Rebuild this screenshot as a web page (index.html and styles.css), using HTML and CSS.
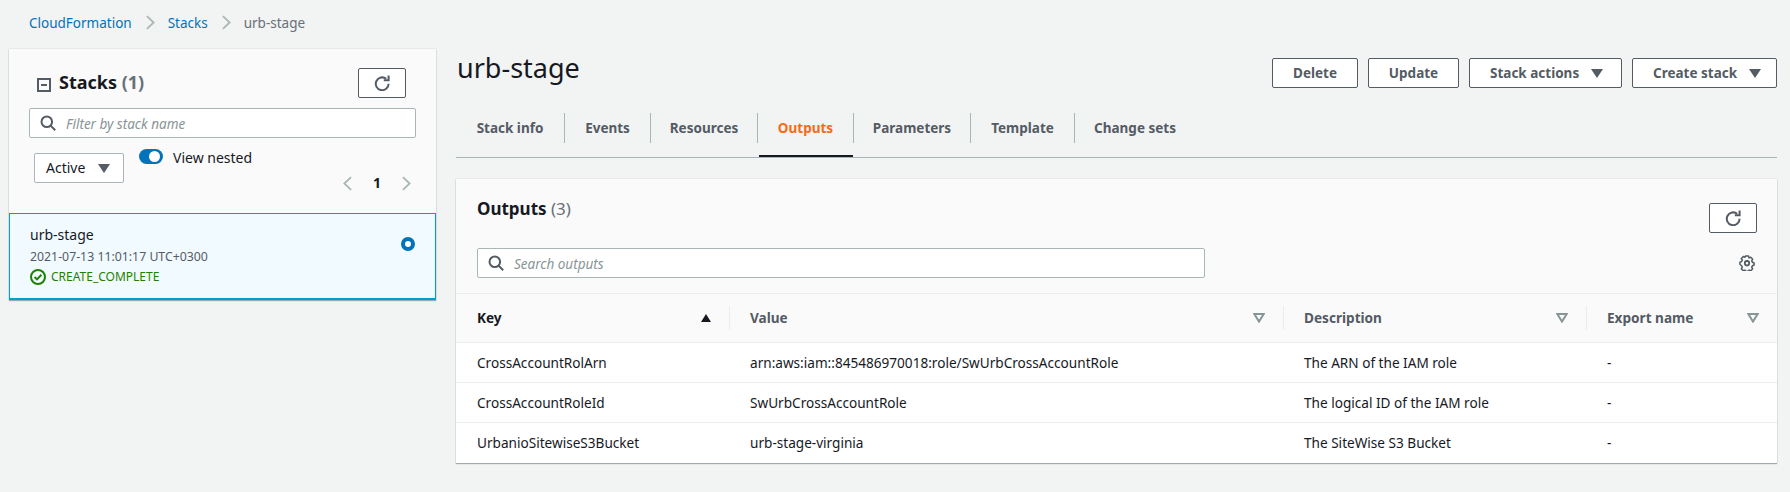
FILE: index.html
```html
<!DOCTYPE html>
<html lang="en">
<head>
  <meta charset="UTF-8">
  <title>urb-stage - CloudFormation</title>
  <link rel="stylesheet" href="styles.css">
</head>
<body>
  <svg class="defs" width="0" height="0">
    <symbol id="refresh" viewBox="0 0 16 16"><path d="M14.600 8.800a6.400 6.400 0 1 1-2.400-5" fill="none" stroke="currentColor" stroke-width="2"/><path d="M9.800 5.300h4.800V.5" fill="none" stroke="currentColor" stroke-width="2"/></symbol>
    <symbol id="search" viewBox="0 0 16 16"><circle cx="6.800" cy="6.800" r="5.300" fill="none" stroke="currentColor" stroke-width="2"/><path d="M10.600 10.600l4.600 4.600" stroke="currentColor" stroke-width="2"/></symbol>
    <symbol id="filter" viewBox="0 0 12 10"><path d="M1.300 1h9.400L6 8.600z" fill="none" stroke="currentColor" stroke-width="2"/></symbol>
  </svg>

  <nav class="crumbs">
    <a href="#">CloudFormation</a>
    <svg class="crumb-sep" viewBox="0 0 10 16"><path d="M1 1l7.500 7L1 15" fill="none" stroke="currentColor" stroke-width="2"/></svg>
    <a href="#">Stacks</a>
    <svg class="crumb-sep" viewBox="0 0 10 16"><path d="M1 1l7.500 7L1 15" fill="none" stroke="currentColor" stroke-width="2"/></svg>
    <span>urb-stage</span>
  </nav>

  <div class="page">
    <aside class="sidebar">
      <div class="side-top">
        <div class="side-head">
          <svg class="collapse" viewBox="0 0 14 14"><rect x="1" y="1" width="12" height="12" fill="none" stroke="currentColor" stroke-width="2"/><path d="M4 7h6" stroke="currentColor" stroke-width="2"/></svg>
          <h2 class="side-title">Stacks <span class="count">(1)</span></h2>
          <button class="btn btn-icon side-refresh"><svg class="icon"><use href="#refresh"/></svg></button>
        </div>
        <div class="search side-search">
          <svg class="icon"><use href="#search"/></svg>
          <span class="placeholder">Filter by stack name</span>
        </div>
        <div class="side-filters">
          <div class="select">Active <span class="caret"></span></div>
          <div class="toggle-wrap">
            <span class="toggle"></span>
            <span class="toggle-label">View nested</span>
          </div>
          <div class="pager">
            <svg class="pager-arrow" viewBox="0 0 10 16"><path d="M9 1L1.500 8 9 15" fill="none" stroke="currentColor" stroke-width="2"/></svg>
            <strong>1</strong>
            <svg class="pager-arrow" viewBox="0 0 10 16"><path d="M1 1l7.500 7L1 15" fill="none" stroke="currentColor" stroke-width="2"/></svg>
          </div>
        </div>
      </div>
      <div class="stack-item">
        <div>
          <div class="stack-name">urb-stage</div>
          <div class="stack-date">2021-07-13 11:01:17 UTC+0300</div>
          <div class="stack-status">
            <svg class="status-icon" viewBox="0 0 16 16"><circle cx="8" cy="8" r="7" fill="none" stroke="currentColor" stroke-width="2"/><path d="M4.600 8l2.400 2.400 4.400-4.600" fill="none" stroke="currentColor" stroke-width="2"/></svg>
            CREATE_COMPLETE
          </div>
        </div>
        <span class="radio"></span>
      </div>
    </aside>

    <main class="content">
      <header class="content-head">
        <h1 class="title">urb-stage</h1>
        <div class="actions">
          <button class="btn btn-delete">Delete</button>
          <button class="btn btn-update">Update</button>
          <button class="btn btn-menu btn-stack">Stack actions <span class="caret"></span></button>
          <button class="btn btn-menu btn-create">Create stack <span class="caret"></span></button>
        </div>
      </header>

      <div class="tabs">
        <a class="tab tab-info" href="#">Stack info</a>
        <a class="tab tab-events" href="#">Events</a>
        <a class="tab tab-res" href="#">Resources</a>
        <a class="tab tab-out active" href="#">Outputs</a>
        <a class="tab tab-par" href="#">Parameters</a>
        <a class="tab tab-tpl" href="#">Template</a>
        <a class="tab tab-chg" href="#">Change sets</a>
      </div>

      <section class="panel">
        <div class="panel-head">
          <div class="panel-top">
            <h2 class="panel-title">Outputs <span class="count">(3)</span></h2>
            <button class="btn btn-icon"><svg class="icon"><use href="#refresh"/></svg></button>
          </div>
          <div class="panel-tools">
            <div class="search out-search">
              <svg class="icon"><use href="#search"/></svg>
              <span class="placeholder">Search outputs</span>
            </div>
            <svg class="gear" viewBox="0 0 16 16"><path d="M6.500 1h3l.5 1.900 1.700-.7 2 2-1 1.700.8 1.400 1.600.7v2l-1.600.7-.8 1.400 1 1.700-2 2-1.700-.7-.5 1.100h-3l-.5-1.100-1.700.7-2-2 1-1.700-.8-1.400L.9 9.300v-2l1.600-.7.800-1.400-1-1.700 2-2 1.700.7z" fill="none" stroke="currentColor" stroke-width="1.500" stroke-linejoin="round"/><circle cx="8" cy="8.200" r="2.200" fill="none" stroke="currentColor" stroke-width="1.800"/></svg>
          </div>
        </div>

        <div class="table">
          <div class="row row-head">
            <div class="cell th th-key">Key <span class="sort"></span></div>
            <div class="cell th">Value <svg class="filter"><use href="#filter"/></svg></div>
            <div class="cell th">Description <svg class="filter"><use href="#filter"/></svg></div>
            <div class="cell th">Export name <svg class="filter"><use href="#filter"/></svg></div>
          </div>
          <div class="row">
            <div class="cell">CrossAccountRolArn</div>
            <div class="cell">arn:aws:iam::845486970018:role/SwUrbCrossAccountRole</div>
            <div class="cell">The ARN of the IAM role</div>
            <div class="cell">-</div>
          </div>
          <div class="row">
            <div class="cell">CrossAccountRoleId</div>
            <div class="cell">SwUrbCrossAccountRole</div>
            <div class="cell">The logical ID of the IAM role</div>
            <div class="cell">-</div>
          </div>
          <div class="row">
            <div class="cell">UrbanioSitewiseS3Bucket</div>
            <div class="cell">urb-stage-virginia</div>
            <div class="cell">The SiteWise S3 Bucket</div>
            <div class="cell">-</div>
          </div>
        </div>
      </section>
    </main>
  </div>
</body>
</html>
```

FILE: styles.css
```css
* {
  box-sizing: border-box;
}

body {
  margin: 0;
  height: 492px;
  overflow: hidden;
  background: #f2f3f3;
  color: #16191f;
  font-family: "Noto Sans", "Open Sans", sans-serif;
  font-size: 14px;
  line-height: 20px;
}

.defs {
  display: block;
}

a {
  color: #0073bb;
  text-decoration: none;
}

h1, h2 {
  margin: 0;
}

.crumbs {
  display: flex;
  align-items: center;
  height: 49px;
  padding: 0 0 4px 29px;
  font-size: 13.500px;
  color: #687078;
}

.crumb-sep {
  width: 9px;
  height: 15px;
  margin: 0 13px 0 14px;
  color: #aab7b8;
}

.page {
  display: flex;
  align-items: flex-start;
}

.sidebar {
  width: 427px;
  margin-left: 9px;
  background: #fafafa;
  box-shadow: 0 1px 1px rgba(0, 22, 43, .3), 0 0 1px rgba(0, 22, 43, .25);
}

.side-top {
  height: 164px;
  padding: 19px 20px 0;
}

.side-head {
  display: flex;
  align-items: center;
  height: 29px;
}

.collapse {
  width: 14px;
  height: 14px;
  margin: 4px 8px 0 8px;
  color: #545b64;
}

.side-title {
  font-size: 18px;
  font-weight: 700;
  line-height: 24px;
  margin-top: -2px;
}

.count {
  color: #687078;
  font-weight: 400;
}

.side-title .count {
  font-weight: 700;
}

.side-refresh {
  margin-left: auto;
  margin-right: 10px;
}

.btn {
  display: inline-flex;
  align-items: center;
  justify-content: center;
  height: 30px;
  padding: 0;
  background: #fff;
  border: 1px solid #545b64;
  border-radius: 2px;
  color: #545b64;
  font: 700 13.500px/20px "Noto Sans", sans-serif;
}

.btn-icon {
  width: 48px;
  height: 30px;
}

.icon {
  width: 16px;
  height: 16px;
  color: #545b64;
}

.search {
  display: flex;
  align-items: center;
  height: 30px;
  background: #fff;
  border: 1px solid #aab7b8;
  border-radius: 2px;
  padding-left: 10px;
}

.side-search {
  margin-top: 11px;
  width: 387px;
}

.placeholder {
  margin: 2px 0 0 10px;
  color: #879596;
  font-style: italic;
  font-size: 13.500px;
}

.side-filters {
  display: flex;
  margin-top: 15px;
  padding-left: 5px;
}

.select {
  display: flex;
  align-items: center;
  justify-content: space-between;
  width: 90px;
  height: 30px;
  padding: 0 13px 0 11px;
  background: #fff;
  border: 1px solid #aab7b8;
  border-radius: 2px;
}

.caret {
  display: inline-block;
  width: 0;
  height: 0;
  border-left: 6px solid transparent;
  border-right: 6px solid transparent;
  border-top: 9px solid #545b64;
}

.toggle-wrap {
  display: flex;
  align-items: flex-start;
  gap: 10px;
  margin: -4px 0 0 15px;
}

.toggle {
  position: relative;
  width: 24px;
  height: 15px;
  border-radius: 8px;
  background: #0073bb;
}

.toggle::after {
  content: "";
  position: absolute;
  top: 2px;
  right: 3px;
  width: 11px;
  height: 11px;
  border-radius: 50%;
  background: #fff;
}

.toggle-label {
  margin-top: -1px;
}

.pager {
  display: flex;
  align-items: center;
  gap: 21px;
  margin: 18px 0 0 91px;
  height: 24px;
}

.pager-arrow {
  width: 9px;
  height: 15px;
  color: #aab7b8;
}

.stack-item {
  display: flex;
  justify-content: space-between;
  height: 87px;
  padding: 10px 20px 0;
  background: #f1faff;
  border: 1px solid #00a1c9;
  border-bottom-width: 2px;
}

.stack-name {
  line-height: 22px;
}

.stack-date {
  margin-top: 1px;
  font-size: 12.300px;
  color: #545b64;
}

.stack-status {
  display: flex;
  align-items: center;
  gap: 5px;
  font-size: 12px;
  color: #1d8102;
}

.status-icon {
  width: 16px;
  height: 16px;
}

.radio {
  width: 14px;
  height: 14px;
  margin-top: 13px;
  border-radius: 50%;
  border: 4px solid #0073bb;
  background: #fff;
}

.content {
  width: 1321px;
  margin-left: 20px;
}

.content-head {
  display: flex;
  justify-content: space-between;
  height: 64px;
  padding-left: 1px;
}

.title {
  font-size: 27px;
  font-weight: 400;
  line-height: 36px;
  margin-top: 1px;
}

.actions {
  display: flex;
  gap: 10px;
  padding-top: 9px;
}

.btn-delete { width: 86px; }
.btn-update { width: 91px; }
.btn-stack { width: 153px; }
.btn-create { width: 145px; gap: 10px; }

.btn-menu {
  justify-content: flex-start;
  gap: 12px;
  padding-left: 20px;
}

.tabs {
  display: flex;
  height: 45px;
  border-bottom: 1px solid #aab7b8;
}

.tab {
  position: relative;
  display: flex;
  align-items: center;
  justify-content: center;
  height: 30px;
  color: #545b64;
  font-weight: 700;
  font-size: 13.500px;
  border-right: 1px solid #aab7b8;
}

.tab-info { width: 109px; }
.tab-events { width: 86px; }
.tab-res { width: 107px; }
.tab-out { width: 96px; }
.tab-par { width: 117px; }
.tab-tpl { width: 104px; }
.tab-chg { width: 120px; border-right: 0; }

.tab.active {
  color: #f96a18;
}

.tab.active::after {
  content: "";
  position: absolute;
  left: 1px;
  right: 0;
  bottom: -14px;
  height: 2px;
  background: #16191f;
}

.panel {
  margin-top: 21px;
  background: #fff;
  box-shadow: 0 1px 1px rgba(0, 22, 43, .3), 0 0 1px rgba(0, 22, 43, .25);
}

.panel-head {
  height: 115px;
  padding: 0 20px 0 21px;
  background: #fafafa;
  border-bottom: 1px solid #eaeded;
}

.panel-top {
  display: flex;
  justify-content: space-between;
  align-items: flex-start;
  padding-top: 24px;
}

.panel-title {
  font-size: 17px;
  font-weight: 700;
  line-height: 24px;
  margin-top: -6px;
}

.panel-tools {
  display: flex;
  justify-content: space-between;
  align-items: center;
  margin-top: 15px;
  padding-right: 2px;
}

.out-search {
  width: 728px;
}

.gear {
  width: 16px;
  height: 16px;
  color: #545b64;
}

.row {
  display: grid;
  grid-template-columns: 274px 554px 303px 1fr;
  align-items: center;
  height: 40px;
  border-bottom: 1px solid #eaeded;
  font-size: 13.600px;
}

.row:last-child {
  height: 40px;
  border-bottom: 0;
}

.cell {
  padding-left: 20px;
}

.cell:first-child {
  padding-left: 21px;
}

.row-head {
  height: 49px;
  background: #fafafa;
}

.th {
  display: flex;
  align-items: center;
  justify-content: space-between;
  height: 24px;
  padding-right: 18px;
  color: #545b64;
  font-weight: 700;
  border-right: 1px solid #eaeded;
}

.th:last-child {
  border-right: 0;
}

.th-key {
  color: #16191f;
}

.sort {
  width: 0;
  height: 0;
  border-left: 5.500px solid transparent;
  border-right: 5.500px solid transparent;
  border-bottom: 8px solid #16191f;
}

.filter {
  width: 12px;
  height: 10px;
  color: #879596;
}
```
